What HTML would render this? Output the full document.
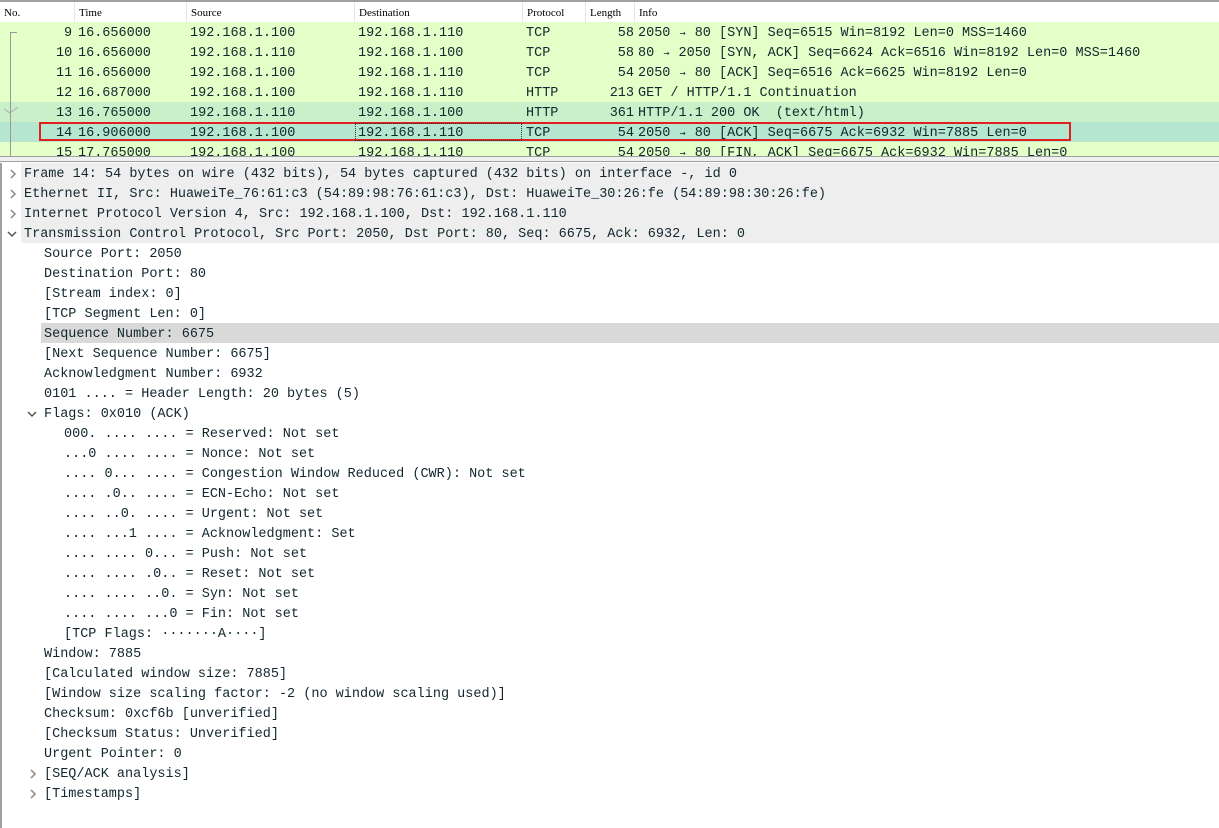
<!DOCTYPE html>
<html><head><meta charset="utf-8"><style>
*{margin:0;padding:0;box-sizing:border-box}
body{width:1219px;height:828px;overflow:hidden;background:#fff;font-family:"Liberation Mono","DejaVu Sans Mono",monospace;font-size:13.5px;color:#12272e;position:relative}
.abs{position:absolute}
#top{left:0;top:0;width:1219px;height:157px;border-top:2px solid #a0a0a0;border-bottom:1px solid #a0a0a0;overflow:hidden}
.hdr{position:absolute;top:0;height:20px;font-family:"Liberation Serif",serif;font-size:11px;line-height:22px;color:#000;border-right:1px solid #e4e4e4;padding-left:4px}
.row{position:absolute;left:0;width:1219px;height:20px;line-height:24px;white-space:pre;background:#e4ffc7}
.row span{position:absolute;top:0}
.row span.len{left:586px;width:48px;text-align:right}
.ar{display:inline-block;width:8.1px;text-align:center;font-family:"DejaVu Sans Mono",monospace;font-size:10px}
#gap{left:0;top:157px;width:1219px;height:5px;background:#f0f0f0;border-bottom:1px solid #a0a0a0}
#det{left:0;top:163px;width:1219px;height:665px;border-left:2px solid #a0a0a0}
.d{position:absolute;left:0;width:1219px;height:20px;line-height:24px;white-space:pre;color:#12272e}
.top{background:#eeeeee;left:19px;width:1200px}
svg.a{position:absolute;width:10px;height:10px}
</style></head><body>
<div id="top" class="abs">
<div class="hdr" style="left:0;width:75px">No.</div>
<div class="hdr" style="left:75px;width:112px">Time</div>
<div class="hdr" style="left:187px;width:168px">Source</div>
<div class="hdr" style="left:355px;width:168px">Destination</div>
<div class="hdr" style="left:523px;width:63px">Protocol</div>
<div class="hdr" style="left:586px;width:49px">Length</div>
<div class="hdr" style="left:635px;width:100px;border:none">Info</div>

<div class="row" style="top:20px"><span style="left:64px">9</span><span style="left:78px">16.656000</span><span style="left:190px">192.168.1.100</span><span style="left:358px">192.168.1.110</span><span style="left:526px">TCP</span><span class="len">58</span><span style="left:638px">2050 <i class="ar" style="font-style:normal">→</i> 80 [SYN] Seq=6515 Win=8192 Len=0 MSS=1460</span></div>
<div class="row" style="top:40px"><span style="left:56px">10</span><span style="left:78px">16.656000</span><span style="left:190px">192.168.1.110</span><span style="left:358px">192.168.1.100</span><span style="left:526px">TCP</span><span class="len">58</span><span style="left:638px">80 <i class="ar" style="font-style:normal">→</i> 2050 [SYN, ACK] Seq=6624 Ack=6516 Win=8192 Len=0 MSS=1460</span></div>
<div class="row" style="top:60px"><span style="left:56px">11</span><span style="left:78px">16.656000</span><span style="left:190px">192.168.1.100</span><span style="left:358px">192.168.1.110</span><span style="left:526px">TCP</span><span class="len">54</span><span style="left:638px">2050 <i class="ar" style="font-style:normal">→</i> 80 [ACK] Seq=6516 Ack=6625 Win=8192 Len=0</span></div>
<div class="row" style="top:80px"><span style="left:56px">12</span><span style="left:78px">16.687000</span><span style="left:190px">192.168.1.100</span><span style="left:358px">192.168.1.110</span><span style="left:526px">HTTP</span><span class="len">213</span><span style="left:638px">GET / HTTP/1.1 Continuation</span></div>
<div class="row" style="top:100px;background:#c9f0c9"><span style="left:56px">13</span><span style="left:78px">16.765000</span><span style="left:190px">192.168.1.110</span><span style="left:358px">192.168.1.100</span><span style="left:526px">HTTP</span><span class="len">361</span><span style="left:638px">HTTP/1.1 200 OK  (text/html)</span></div>
<div class="row" style="top:120px;background:#b5e6d0"><span style="left:56px">14</span><span style="left:78px">16.906000</span><span style="left:190px">192.168.1.100</span><span style="left:358px">192.168.1.110</span><span style="left:526px">TCP</span><span class="len">54</span><span style="left:638px">2050 <i class="ar" style="font-style:normal">→</i> 80 [ACK] Seq=6675 Ack=6932 Win=7885 Len=0</span></div>
<div class="row" style="top:140px"><span style="left:56px">15</span><span style="left:78px">17.765000</span><span style="left:190px">192.168.1.100</span><span style="left:358px">192.168.1.110</span><span style="left:526px">TCP</span><span class="len">54</span><span style="left:638px">2050 <i class="ar" style="font-style:normal">→</i> 80 [FIN, ACK] Seq=6675 Ack=6932 Win=7885 Len=0</span></div>
<div class="abs" style="left:39px;top:120px;width:1032px;height:19px;border:2px solid #e02020"></div>
<div class="abs" style="left:355px;top:121px;width:167px;height:18px;border:1px dotted #333"></div>
<div class="abs" style="left:10px;top:30px;width:1px;height:127px;background:#999"></div>
<div class="abs" style="left:10px;top:30px;width:7px;height:1px;background:#999"></div>
<svg class="abs" style="left:3px;top:104px" width="16" height="10"><path d="M1 3 L7 7 L15 1" fill="none" stroke="#aaa" stroke-width="1"/></svg>
</div>
<div id="gap" class="abs"></div>
<div id="det" class="abs">
<div class="d top" style="top:0"><span style="margin-left:3px">Frame 14: 54 bytes on wire (432 bits), 54 bytes captured (432 bits) on interface -, id 0</span></div>
<div class="d top" style="top:20px"><span style="margin-left:3px">Ethernet II, Src: HuaweiTe_76:61:c3 (54:89:98:76:61:c3), Dst: HuaweiTe_30:26:fe (54:89:98:30:26:fe)</span></div>
<div class="d top" style="top:40px"><span style="margin-left:3px">Internet Protocol Version 4, Src: 192.168.1.100, Dst: 192.168.1.110</span></div>
<div class="d top" style="top:60px"><span style="margin-left:3px">Transmission Control Protocol, Src Port: 2050, Dst Port: 80, Seq: 6675, Ack: 6932, Len: 0</span></div>
<svg class="a" style="left:6px;top:6px" viewBox="0 0 10 10"><path d="M3 1 L7 5 L3 9" fill="none" stroke="#888" stroke-width="1.5"/></svg>
<svg class="a" style="left:6px;top:26px" viewBox="0 0 10 10"><path d="M3 1 L7 5 L3 9" fill="none" stroke="#888" stroke-width="1.5"/></svg>
<svg class="a" style="left:6px;top:46px" viewBox="0 0 10 10"><path d="M3 1 L7 5 L3 9" fill="none" stroke="#888" stroke-width="1.5"/></svg>
<svg class="a" style="left:5px;top:66px" viewBox="0 0 10 10"><path d="M1 3 L5 7 L9 3" fill="none" stroke="#555" stroke-width="1.5"/></svg>
<div class="d" style="top:80px;left:42px">Source Port: 2050</div>
<div class="d" style="top:100px;left:42px">Destination Port: 80</div>
<div class="d" style="top:120px;left:42px">[Stream index: 0]</div>
<div class="d" style="top:140px;left:42px">[TCP Segment Len: 0]</div>
<div class="d" style="top:160px;left:39px;width:1180px;background:#d9d9d9"><span style="margin-left:3px">Sequence Number: 6675</span></div>
<div class="d" style="top:180px;left:42px">[Next Sequence Number: 6675]</div>
<div class="d" style="top:200px;left:42px">Acknowledgment Number: 6932</div>
<div class="d" style="top:220px;left:42px">0101 .... = Header Length: 20 bytes (5)</div>
<svg class="a" style="left:25px;top:246px" viewBox="0 0 10 10"><path d="M1 3 L5 7 L9 3" fill="none" stroke="#555" stroke-width="1.5"/></svg>
<div class="d" style="top:240px;left:42px">Flags: 0x010 (ACK)</div>
<div class="d" style="top:260px;left:62px">000. .... .... = Reserved: Not set</div>
<div class="d" style="top:280px;left:62px">...0 .... .... = Nonce: Not set</div>
<div class="d" style="top:300px;left:62px">.... 0... .... = Congestion Window Reduced (CWR): Not set</div>
<div class="d" style="top:320px;left:62px">.... .0.. .... = ECN-Echo: Not set</div>
<div class="d" style="top:340px;left:62px">.... ..0. .... = Urgent: Not set</div>
<div class="d" style="top:360px;left:62px">.... ...1 .... = Acknowledgment: Set</div>
<div class="d" style="top:380px;left:62px">.... .... 0... = Push: Not set</div>
<div class="d" style="top:400px;left:62px">.... .... .0.. = Reset: Not set</div>
<div class="d" style="top:420px;left:62px">.... .... ..0. = Syn: Not set</div>
<div class="d" style="top:440px;left:62px">.... .... ...0 = Fin: Not set</div>
<div class="d" style="top:460px;left:62px">[TCP Flags: ·······A····]</div>
<div class="d" style="top:480px;left:42px">Window: 7885</div>
<div class="d" style="top:500px;left:42px">[Calculated window size: 7885]</div>
<div class="d" style="top:520px;left:42px">[Window size scaling factor: -2 (no window scaling used)]</div>
<div class="d" style="top:540px;left:42px">Checksum: 0xcf6b [unverified]</div>
<div class="d" style="top:560px;left:42px">[Checksum Status: Unverified]</div>
<div class="d" style="top:580px;left:42px">Urgent Pointer: 0</div>
<svg class="a" style="left:26px;top:606px" viewBox="0 0 10 10"><path d="M3 1 L7 5 L3 9" fill="none" stroke="#888" stroke-width="1.5"/></svg>
<div class="d" style="top:600px;left:42px">[SEQ/ACK analysis]</div>
<svg class="a" style="left:26px;top:626px" viewBox="0 0 10 10"><path d="M3 1 L7 5 L3 9" fill="none" stroke="#888" stroke-width="1.5"/></svg>
<div class="d" style="top:620px;left:42px">[Timestamps]</div>
</div>
</body></html>
